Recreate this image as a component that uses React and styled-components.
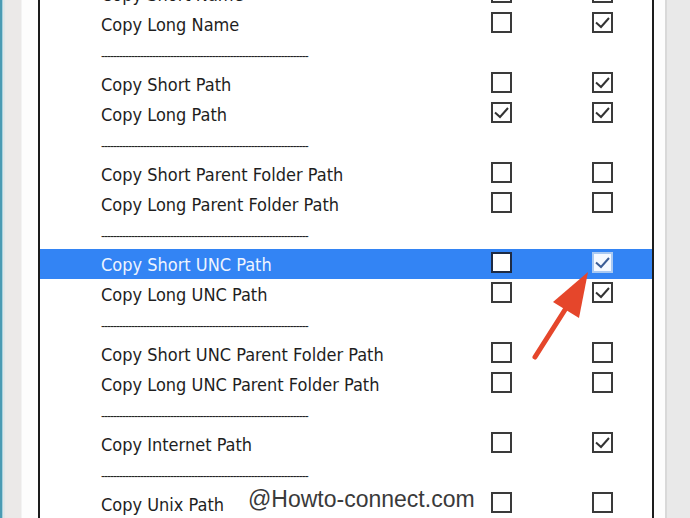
import React from "react";
import styled, { createGlobalStyle } from "styled-components";

const Global = createGlobalStyle`
  html, body { margin: 0; padding: 0; background: #e9e9e9; }
  body { overflow: hidden; }
`;

const Page = styled.div`
  position: relative;
  width: 690px;
  height: 518px;
  display: flex;
  overflow: hidden;
  background: #e9e9e9;
`;

const EdgeStrip = styled.div`
  width: 22px;
  flex: none;
  background: linear-gradient(
    to right,
    #4a9bb3 0 2px,
    #a9d0dc 2px 3px,
    #dfe6e7 3px 5px,
    #ebe9e8 5px 21px,
    #f3f3f3 21px 22px
  );
`;

const Gutter = styled.div`
  width: ${(p) => p.$w}px;
  flex: none;
  background: #fdfdfd;
`;

const Panel = styled.div`
  width: 612px;
  flex: none;
  border-left: 2px solid #1c1c1c;
  border-right: 2px solid #1c1c1c;
  background: #ffffff;
  overflow: hidden;
`;

const RightEdge = styled.div`
  flex: 1;
  border-left: 2px solid #d9d9d9;
  background: #e9e9e9;
`;

const List = styled.div`
  margin-top: -21px;
  display: flex;
  flex-direction: column;
`;

const Row = styled.div`
  height: 30px;
  display: grid;
  grid-template-columns: 390px 101px 21px;
  align-items: start;
  padding-left: 61px;
  background: ${(p) => (p.$selected ? "#3384f4" : "transparent")};
`;

const Label = styled.div`
  font-family: "DejaVu Sans Condensed", "DejaVu Sans", sans-serif;
  font-size: 18px;
  line-height: 30px;
  padding-top: 1px;
  color: ${(p) => (p.$selected ? "#eef4ff" : "#1e1e1e")};
  white-space: nowrap;
`;

const Separator = styled.div`
  height: 30px;
  font-family: "Liberation Sans", sans-serif;
  font-size: 12px;
  line-height: 30px;
  padding-top: 2px;
  box-sizing: border-box;
  color: #1e1e1e;
  white-space: nowrap;
  letter-spacing: -1px;
`;

const Box = styled.div`
  margin-top: 3px;
  width: 21px;
  height: 21px;
  box-sizing: border-box;
  border: 2px solid ${(p) => (p.$tone === "focus" ? "#a9c9f2" : p.$tone === "sel" ? "#1e2b44" : "#3a3a3a")};
  background: ${(p) => (p.$tone === "focus" ? "#f5f9ff" : "#ffffff")};
  display: flex;
  align-items: center;
  justify-content: center;
`;

const Watermark = styled.div`
  position: absolute;
  left: 248px;
  top: 488px;
  font-family: "Liberation Sans", Arial, sans-serif;
  font-size: 23px;
  line-height: 23px;
  color: #3a3a3a;
  white-space: nowrap;
`;

const ArrowSvg = styled.svg`
  position: absolute;
  left: 0;
  top: 0;
  pointer-events: none;
`;

const Check = ({ color }) => (
  <svg width="17" height="17" viewBox="0 0 17 17">
    <path d="M2 8.5 L7 13 L15 4" fill="none" stroke={color} strokeWidth="2" strokeLinejoin="miter" />
  </svg>
);

const CheckBox = ({ checked, tone }) => (
  <Box $tone={tone}>
    {checked && <Check color={tone === "focus" ? "#3b5d96" : "#333333"} />}
  </Box>
);

const rows = [
  { label: "Copy Short Name", a: false, b: false },
  { label: "Copy Long Name", a: false, b: true },
  { sep: true },
  { label: "Copy Short Path", a: false, b: true },
  { label: "Copy Long Path", a: true, b: true },
  { sep: true },
  { label: "Copy Short Parent Folder Path", a: false, b: false },
  { label: "Copy Long Parent Folder Path", a: false, b: false },
  { sep: true },
  { label: "Copy Short UNC Path", a: false, b: true, selected: true },
  { label: "Copy Long UNC Path", a: false, b: true },
  { sep: true },
  { label: "Copy Short UNC Parent Folder Path", a: false, b: false },
  { label: "Copy Long UNC Parent Folder Path", a: false, b: false },
  { sep: true },
  { label: "Copy Internet Path", a: false, b: true },
  { sep: true },
  { label: "Copy Unix Path", a: false, b: false },
];

export default function App() {
  return (
    <>
      <Global />
      <Page>
        <EdgeStrip />
        <Gutter $w={16} />
        <Panel>
          <List>
            {rows.map((r, i) =>
              r.sep ? (
                <Row key={i}>
                  <Separator>{"-".repeat(69)}</Separator>
                </Row>
              ) : (
                <Row key={i} $selected={r.selected}>
                  <Label $selected={r.selected}>{r.label}</Label>
                  <CheckBox checked={r.a} tone={r.selected ? "sel" : "normal"} />
                  <CheckBox checked={r.b} tone={r.selected ? "focus" : "normal"} />
                </Row>
              )
            )}
          </List>
        </Panel>
        <Gutter $w={11} />
        <RightEdge />
        <ArrowSvg width="690" height="518" viewBox="0 0 690 518">
          <line x1="535" y1="357" x2="568" y2="305" stroke="#e5462b" strokeWidth="5" strokeLinecap="round" />
          <polygon points="588,272 553,302 579,318" fill="#e5462b" />
        </ArrowSvg>
        <Watermark>@Howto-connect.com</Watermark>
      </Page>
    </>
  );
}
